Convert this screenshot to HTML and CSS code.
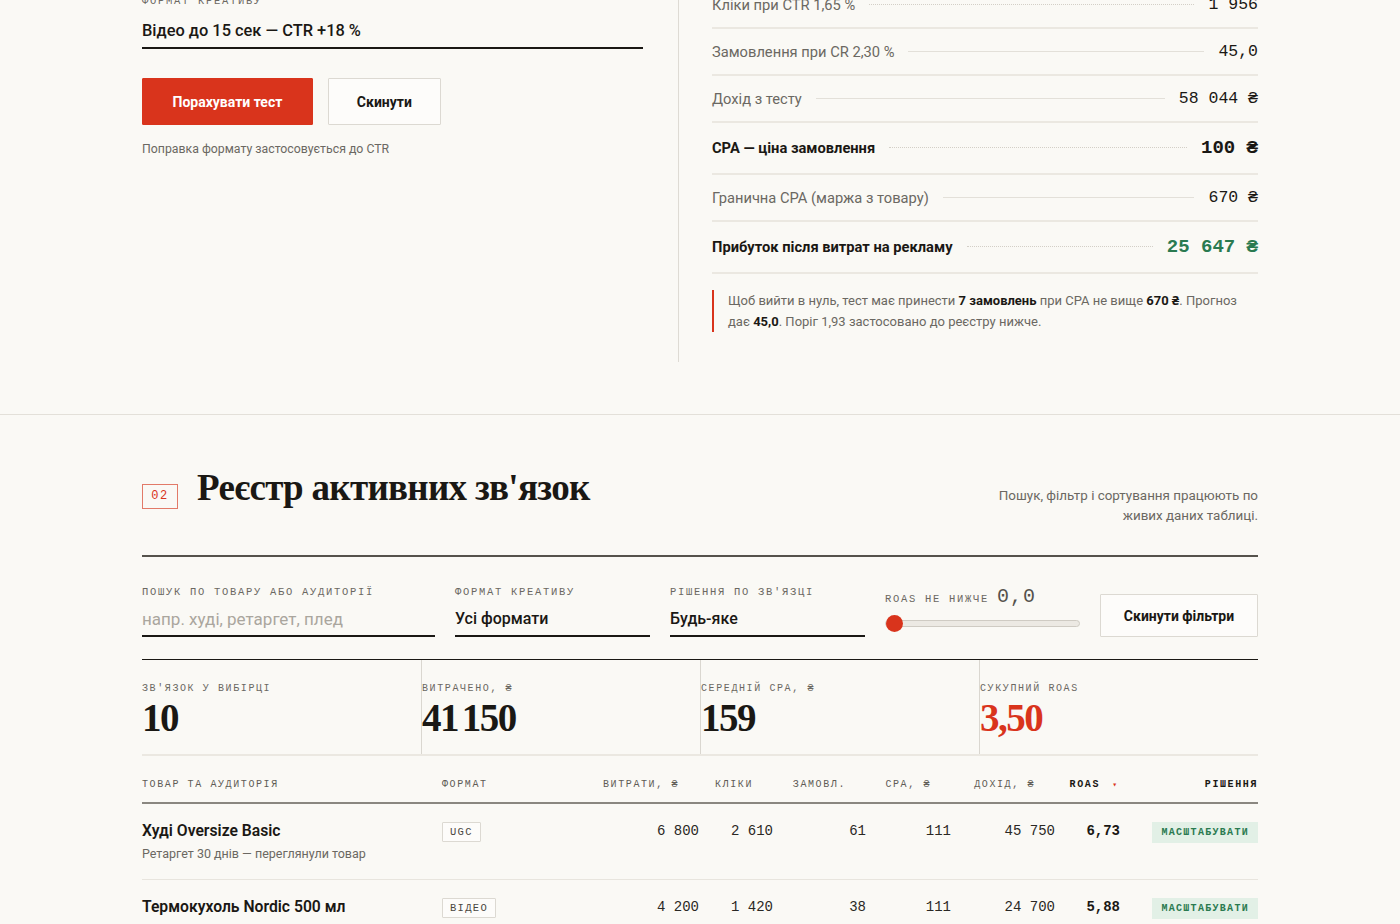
FILE: index.html
```html
<!DOCTYPE html>
<html lang="uk">
<head>
    <meta charset="UTF-8">
    <meta name="viewport" content="width=device-width, initial-scale=1.0">
    <title>Реєстр активних зв'язок</title>
    <link rel="stylesheet" href="styles.css">
</head>
<body>

<section class="band band-calc">
    <div class="wrap calc">
        <div class="calc-form">
            <div class="field">
                <label class="label" for="creative">Формат креативу</label>
                <select id="creative" class="control control-lg">
                    <option>Відео до 15 сек — CTR +18 %</option>
                    <option>UGC — CTR +25 %</option>
                    <option>Статика — без поправки</option>
                </select>
            </div>
            <div class="actions">
                <button type="button" class="btn btn-primary">Порахувати тест</button>
                <button type="button" class="btn">Скинути</button>
            </div>
            <p class="hint">Поправка формату застосовується до CTR</p>
        </div>

        <div class="calc-result">
            <div class="line">
                <span class="line-name">Кліки при CTR 1,65 %</span>
                <span class="leader dotted"></span>
                <span class="line-val">1 956</span>
            </div>
            <div class="line">
                <span class="line-name">Замовлення при CR 2,30 %</span>
                <span class="leader"></span>
                <span class="line-val">45,0</span>
            </div>
            <div class="line">
                <span class="line-name">Дохід з тесту</span>
                <span class="leader"></span>
                <span class="line-val">58 044 ₴</span>
            </div>
            <div class="line line-key">
                <span class="line-name">CPA — ціна замовлення</span>
                <span class="leader dotted"></span>
                <span class="line-val val-lg">100 ₴</span>
            </div>
            <div class="line">
                <span class="line-name">Гранична CPA (маржа з товару)</span>
                <span class="leader"></span>
                <span class="line-val">670 ₴</span>
            </div>
            <div class="line line-key">
                <span class="line-name">Прибуток після витрат на рекламу</span>
                <span class="leader dotted"></span>
                <span class="line-val val-profit">25 647 ₴</span>
            </div>
            <p class="note">
                Щоб вийти в нуль, тест має принести <b>7 замовлень</b> при CPA не вище <b>670 ₴</b>. Прогноз
                дає <b>45,0</b>. Поріг 1,93 застосовано до реєстру нижче.
            </p>
        </div>
    </div>
</section>

<section class="band band-registry">
    <div class="wrap">
        <header class="reg-head">
            <div class="reg-title">
                <span class="sec-num">02</span>
                <h2>Реєстр активних зв'язок</h2>
            </div>
            <p class="reg-note">Пошук, фільтр і сортування працюють по<br>живих даних таблиці.</p>
        </header>

        <div class="filters">
            <div class="field">
                <label class="label" for="q">Пошук по товару або аудиторії</label>
                <input id="q" class="control" type="text" placeholder="напр. худі, ретаргет, плед">
            </div>
            <div class="field">
                <label class="label" for="fmt">Формат креативу</label>
                <select id="fmt" class="control">
                    <option>Усі формати</option>
                    <option>UGC</option>
                    <option>Відео</option>
                    <option>Статика</option>
                </select>
            </div>
            <div class="field">
                <label class="label" for="decision">Рішення по зв'язці</label>
                <select id="decision" class="control">
                    <option>Будь-яке</option>
                    <option>Масштабувати</option>
                    <option>Тримати</option>
                    <option>Вимкнути</option>
                </select>
            </div>
            <div class="field field-range">
                <label class="label" for="roas">ROAS не нижче <span class="range-out">0,0</span></label>
                <input id="roas" class="range" type="range" min="0" max="8" step="0.1" value="0">
            </div>
            <button type="button" class="btn btn-filter">Скинути фільтри</button>
        </div>

        <div class="stats">
            <div class="stat">
                <div class="label">Зв'язок у вибірці</div>
                <div class="stat-val">10</div>
            </div>
            <div class="stat">
                <div class="label">Витрачено, ₴</div>
                <div class="stat-val">41<span class="thin"> </span>150</div>
            </div>
            <div class="stat">
                <div class="label">Середній CPA, ₴</div>
                <div class="stat-val">159</div>
            </div>
            <div class="stat">
                <div class="label">Сукупний ROAS</div>
                <div class="stat-val stat-red">3,50</div>
            </div>
        </div>

        <table class="reg">
            <colgroup>
                <col style="width: 300px">
                <col style="width: 133px">
                <col style="width: 124px">
                <col style="width: 74px">
                <col style="width: 93px">
                <col style="width: 85px">
                <col style="width: 104px">
                <col style="width: 65px">
                <col style="width: 138px">
            </colgroup>
            <thead>
                <tr>
                    <th class="t-left">Товар та аудиторія</th>
                    <th class="t-left">Формат</th>
                    <th>Витрати, ₴<i class="sort"></i></th>
                    <th>Кліки<i class="sort"></i></th>
                    <th>Замовл.<i class="sort"></i></th>
                    <th>CPA, ₴<i class="sort"></i></th>
                    <th>Дохід, ₴<i class="sort"></i></th>
                    <th class="sorted">ROAS<i class="sort">▾</i></th>
                    <th class="th-decision">Рішення</th>
                </tr>
            </thead>
            <tbody>
                <tr>
                    <td class="t-left">
                        <div class="prod">Худі Oversize Basic</div>
                        <div class="aud">Ретаргет 30 днів — переглянули товар</div>
                    </td>
                    <td class="t-left"><span class="fmt">UGC</span></td>
                    <td>6 800</td>
                    <td>2 610</td>
                    <td>61</td>
                    <td>111</td>
                    <td>45 750</td>
                    <td class="roas">6,73</td>
                    <td><span class="verdict">Масштабувати</span></td>
                </tr>
                <tr>
                    <td class="t-left">
                        <div class="prod">Термокухоль Nordic 500 мл</div>
                        <div class="aud">Lookalike 1 % — покупці</div>
                    </td>
                    <td class="t-left"><span class="fmt">Відео</span></td>
                    <td>4 200</td>
                    <td>1 420</td>
                    <td>38</td>
                    <td>111</td>
                    <td>24 700</td>
                    <td class="roas">5,88</td>
                    <td><span class="verdict">Масштабувати</span></td>
                </tr>
                <tr>
                    <td class="t-left">
                        <div class="prod">Плед Merino Soft</div>
                        <div class="aud">Інтереси — інтер'єр, затишок</div>
                    </td>
                    <td class="t-left"><span class="fmt">Статика</span></td>
                    <td>5 600</td>
                    <td>1 980</td>
                    <td>29</td>
                    <td>193</td>
                    <td>20 300</td>
                    <td class="roas">3,63</td>
                    <td><span class="verdict verdict-hold">Тримати</span></td>
                </tr>
            </tbody>
        </table>
    </div>
</section>

</body>
</html>
```

FILE: styles.css
```css
/* Base */
body {
    margin: 0;
    background-color: #faf9f5;
    color: #1a1814;
    font-family: Roboto, "Noto Sans", sans-serif;
}
.wrap {
    width: 1116px;
    margin: 0 auto;
}
.band {
    border-bottom: 1px solid #e3e0d9;
}

/* Shared form bits */
.label {
    display: block;
    font-family: "Liberation Mono", "DejaVu Sans Mono", monospace;
    font-size: 10.5px;
    line-height: 14px;
    letter-spacing: 1.7px;
    text-transform: uppercase;
    color: #6b6862;
}
.control {
    display: block;
    width: 100%;
    box-sizing: border-box;
    margin: 0;
    padding: 0 0 5px;
    border: none;
    border-bottom: 2px solid #1a1814;
    border-radius: 0;
    background: transparent;
    font-family: Roboto, "Noto Sans", sans-serif;
    font-size: 16px;
    font-weight: 500;
    line-height: 22px;
    height: 29px;
    color: #1a1814;
    appearance: none;
    -webkit-appearance: none;
    outline: none;
}
.control-lg {
    font-size: 16.4px;
}
.control::placeholder {
    color: #aaa69e;
    font-size: 17px;
    font-weight: 400;
}
.btn {
    height: 47px;
    padding: 0 28px;
    border: 1.5px solid #dcd9d2;
    border-radius: 1px;
    background: #fdfcfa;
    font-family: Roboto, "Noto Sans", sans-serif;
    font-size: 14px;
    font-weight: 700;
    color: #1a1814;
    cursor: pointer;
}
.btn-primary {
    background: #d9341c;
    border-color: #d9341c;
    color: #fff;
    padding: 0 29.5px;
}

/* Calculator */
.calc {
    display: grid;
    grid-template-columns: 536px 1fr;
    margin-top: -21px;
    padding-bottom: 52px;
}
.calc-form {
    padding: 15px 35px 0 0;
}
.calc-form .label {
    margin-bottom: 12px;
}
.actions {
    display: flex;
    gap: 15px;
    margin-top: 29px;
}
.hint {
    margin: 17px 0 0;
    font-size: 12.3px;
    line-height: 15px;
    color: #6b6862;
}
.calc-result {
    border-left: 1px solid #dedbd4;
    padding: 3px 0 30px 33px;
}
.line {
    display: flex;
    align-items: center;
    height: 45px;
    border-bottom: 2px solid #ebe8e1;
    font-size: 14.7px;
    color: #6b6862;
}
.line-key {
    height: 50px;
    font-weight: 700;
    color: #1a1814;
}
.leader {
    flex: 1;
    margin: 0 14px;
    height: 1px;
    background: #e3e0d9;
}
.leader.dotted {
    background: none;
    border-top: 1px dotted #d3cfc7;
}
.line-val {
    font-family: "Liberation Mono", "DejaVu Sans Mono", monospace;
    font-size: 16.5px;
    color: #1a1814;
}
.val-lg {
    font-size: 19px;
    font-weight: 700;
}
.val-profit {
    font-size: 19px;
    font-weight: 700;
    color: #2a7a50;
}
.note {
    margin: 16px 0 0;
    padding-left: 14px;
    border-left: 2px solid #d9341c;
    font-size: 13px;
    line-height: 21px;
    color: #6b6862;
}
.note b {
    color: #1a1814;
}

/* Registry header */
.band-registry {
    border-bottom: none;
    padding-top: 52px;
}
.reg-head {
    display: flex;
    justify-content: space-between;
    align-items: flex-end;
    padding-bottom: 29px;
    border-bottom: 2px solid #55524c;
}
.reg-title {
    display: flex;
    align-items: flex-start;
    gap: 19px;
    padding-bottom: 17px;
}
.sec-num {
    display: inline-block;
    box-sizing: border-box;
    width: 36px;
    height: 25px;
    margin-top: 17px;
    border: 1px solid #e27a68;
    text-align: center;
    font-family: "Liberation Mono", "DejaVu Sans Mono", monospace;
    font-size: 12px;
    line-height: 23px;
    letter-spacing: 1.5px;
    color: #d9341c;
}
.reg-title h2 {
    margin: 0;
    font-family: "Liberation Serif", "DejaVu Serif", serif;
    font-size: 37px;
    line-height: 42px;
    font-weight: 700;
    letter-spacing: -0.7px;
}
.reg-note {
    margin: 0;
    text-align: right;
    font-size: 13.4px;
    line-height: 20px;
    color: #6b6862;
}

/* Filters */
.filters {
    display: grid;
    grid-template-columns: 293px 195px 195px 195px 1fr;
    column-gap: 20px;
    align-items: end;
    padding-top: 28px;
    padding-bottom: 22px;
    border-bottom: 1px solid #1a1814;
}
.filters .label {
    margin-bottom: 9px;
}
.field-range .label {
    display: flex;
    align-items: baseline;
    gap: 8px;
    margin-bottom: 8px;
}
.range-out {
    font-size: 20px;
    letter-spacing: 1px;
    color: #55524c;
}
.range {
    display: block;
    width: 100%;
    margin: 0 0 5px;
    height: 18px;
    background: transparent;
    -webkit-appearance: none;
    appearance: none;
}
.range::-webkit-slider-runnable-track {
    height: 7px;
    border: 1px solid #cfcbc3;
    border-radius: 4px;
    background: #ece9e3;
}
.range::-webkit-slider-thumb {
    -webkit-appearance: none;
    width: 17px;
    height: 17px;
    margin-top: -6px;
    border-radius: 50%;
    border: none;
    background: #d9341c;
}
.btn-filter {
    height: 43px;
    padding: 0;
}

/* Summary stats */
.stats {
    display: grid;
    grid-template-columns: repeat(4, 1fr);
    border-bottom: 2px solid #ebe8e1;
}
.stat {
    padding: 22px 0 16px;
}
.stat + .stat {
    border-left: 1px solid #dad7d0;
}
.stat .label {
    font-size: 10px;
    letter-spacing: 1.6px;
}
.stat-val {
    margin-top: 2px;
    font-family: "Liberation Serif", "DejaVu Serif", serif;
    font-size: 39px;
    line-height: 40px;
    font-weight: 700;
    letter-spacing: -1.5px;
}
.stat-val .thin {
    letter-spacing: -6px;
}
.stat-red {
    color: #d9341c;
}

/* Registry table */
.reg {
    width: 1116px;
    table-layout: fixed;
    border-collapse: collapse;
}
.reg th {
    padding: 22px 0 10px;
    border-bottom: 2px solid #8a8780;
    text-align: right;
    font-family: "Liberation Mono", "DejaVu Sans Mono", monospace;
    font-size: 10px;
    line-height: 14px;
    letter-spacing: 1.6px;
    text-transform: uppercase;
    font-weight: 400;
    color: #5f5c56;
    white-space: nowrap;
}
.reg th.sorted,
.reg th.th-decision {
    color: #1a1814;
    font-weight: 700;
}
.reg .sort {
    display: inline-block;
    box-sizing: border-box;
    width: 20px;
    padding-right: 3px;
    font-style: normal;
    font-size: 8px;
    text-align: right;
    color: #d9341c;
    letter-spacing: 0;
}
.reg .t-left {
    text-align: left;
}
.reg td {
    padding: 17px 0 16px;
    border-bottom: 1.5px solid #e8e5de;
    vertical-align: top;
    text-align: right;
    font-family: "Liberation Mono", "DejaVu Sans Mono", monospace;
    font-size: 14px;
    line-height: 20px;
    color: #2a2824;
}
.reg td.roas {
    font-weight: 700;
    color: #1a1814;
}
.prod {
    font-family: Roboto, "Noto Sans", sans-serif;
    font-size: 15.7px;
    font-weight: 600;
    line-height: 20px;
    color: #1a1814;
}
.aud {
    margin-top: 4px;
    font-family: Roboto, "Noto Sans", sans-serif;
    font-size: 12.5px;
    line-height: 18px;
    color: #6b6862;
}
.fmt {
    display: inline-block;
    padding: 0 7px;
    border: 1.5px solid #dcd9d2;
    border-radius: 1px;
    background: #fdfcfa;
    font-size: 10.5px;
    line-height: 18px;
    letter-spacing: 1.3px;
    text-transform: uppercase;
    color: #4a4741;
}
.verdict {
    display: inline-block;
    padding: 0 9px;
    background: #e2f0e6;
    font-size: 10px;
    line-height: 21px;
    font-weight: 700;
    letter-spacing: 1.3px;
    text-transform: uppercase;
    color: #2a7a50;
}
.verdict-hold {
    background: #f3ecd9;
    color: #8a6a1c;
}
```
